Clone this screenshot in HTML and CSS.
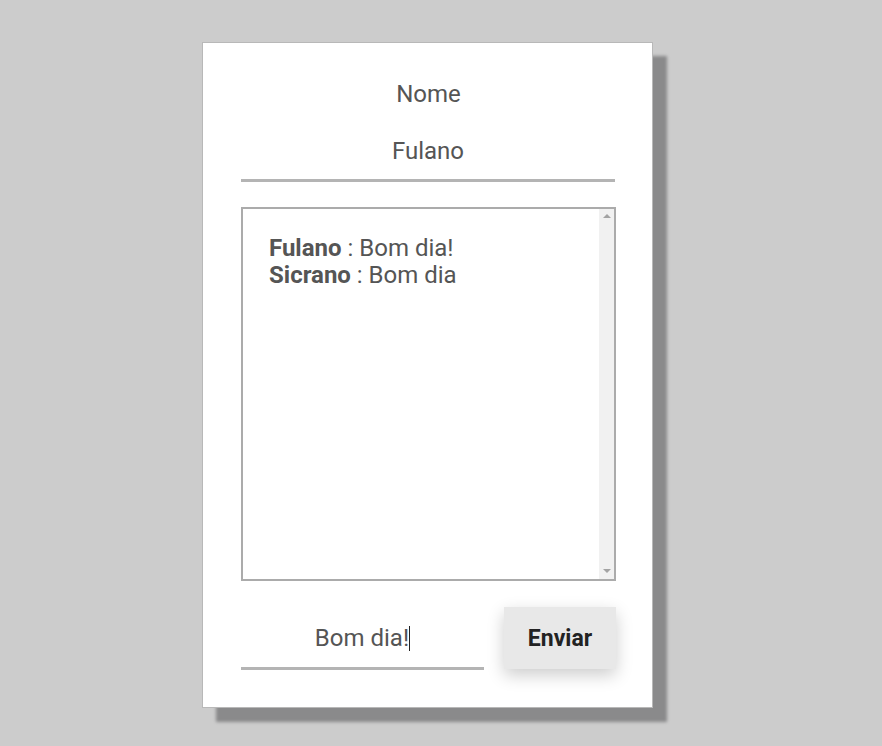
FILE: index.html
```html
<!DOCTYPE html>
<html lang="pt">
<head>
<meta charset="utf-8">
<title>Chat</title>
<link rel="stylesheet" href="styles.css">
</head>
<body>
  <div class="card">
    <label class="label" for="nome">Nome</label>
    <input class="name-input" id="nome" type="text" value="Fulano">
    <div class="messages">
      <div class="messages-body">
        <div class="msg"><b>Fulano</b> : Bom dia!</div>
        <div class="msg"><b>Sicrano</b> : Bom dia</div>
      </div>
      <div class="scrollbar">
        <span class="arrow arrow-up"></span>
        <span class="arrow arrow-down"></span>
      </div>
    </div>
    <div class="send-row">
      <div class="msg-input">Bom dia!<span class="caret"></span></div>
      <button class="send-btn" type="button">Enviar</button>
    </div>
  </div>
</body>
</html>
```

FILE: styles.css
```css
html, body {
  margin: 0;
  padding: 0;
}

body {
  background: #cccccc;
  font-family: Roboto, "Noto Sans", Arial, sans-serif;
  color: #555555;
  min-height: 746px;
}

.card {
  box-sizing: border-box;
  width: 451px;
  margin: 42px 0 0 202px;
  padding: 37px 36px 37px 38px;
  background: #ffffff;
  border: 1px solid #b8b8b8;
  box-shadow: 14px 14px 3px #8a8a8b;
  display: flex;
  flex-direction: column;
}

.label {
  display: block;
  text-align: center;
  font-size: 24px;
  line-height: 28px;
  margin-bottom: 22px;
}

.name-input,
.msg-input {
  font-family: inherit;
  font-size: 24px;
  line-height: 28px;
  height: 28px;
  color: #555555;
  text-align: center;
  border: none;
  border-bottom: 3px solid #b4b4b4;
  outline: none;
  background: transparent;
}

.name-input {
  box-sizing: content-box;
  padding: 7px 0 14px;
  width: 374px;
}

.messages {
  box-sizing: border-box;
  margin-top: 25px;
  width: 375px;
  height: 374px;
  border: 2px solid #ababab;
  display: flex;
  font-size: 24px;
  line-height: 27px;
}

.messages-body {
  flex: 1;
  padding: 26px 26px;
}

.messages b {
  font-weight: 700;
}

.scrollbar {
  width: 15px;
  background: #f1f1f1;
  display: flex;
  flex-direction: column;
  justify-content: space-between;
  align-items: center;
  padding: 5px 0 6px;
  box-sizing: border-box;
}

.arrow {
  width: 0;
  height: 0;
  border-left: 4px solid transparent;
  border-right: 4px solid transparent;
}

.arrow-up {
  border-bottom: 4px solid #a3a3a3;
}

.arrow-down {
  border-top: 4px solid #a3a3a3;
}

.send-row {
  margin-top: 26px;
  display: flex;
  align-items: flex-end;
  justify-content: space-between;
}

.msg-input {
  box-sizing: content-box;
  width: 243px;
  padding: 6px 0 15px;
}

.caret {
  display: inline-block;
  width: 1px;
  height: 25px;
  background: #222222;
  vertical-align: -5px;
}

.send-btn {
  width: 112px;
  height: 62px;
  margin-bottom: 1px;
  border: none;
  background: #e8e8e8;
  color: #222222;
  font-family: inherit;
  font-size: 23px;
  font-weight: 700;
  box-shadow: 0 6px 16px rgba(0, 0, 0, 0.2);
}
```
